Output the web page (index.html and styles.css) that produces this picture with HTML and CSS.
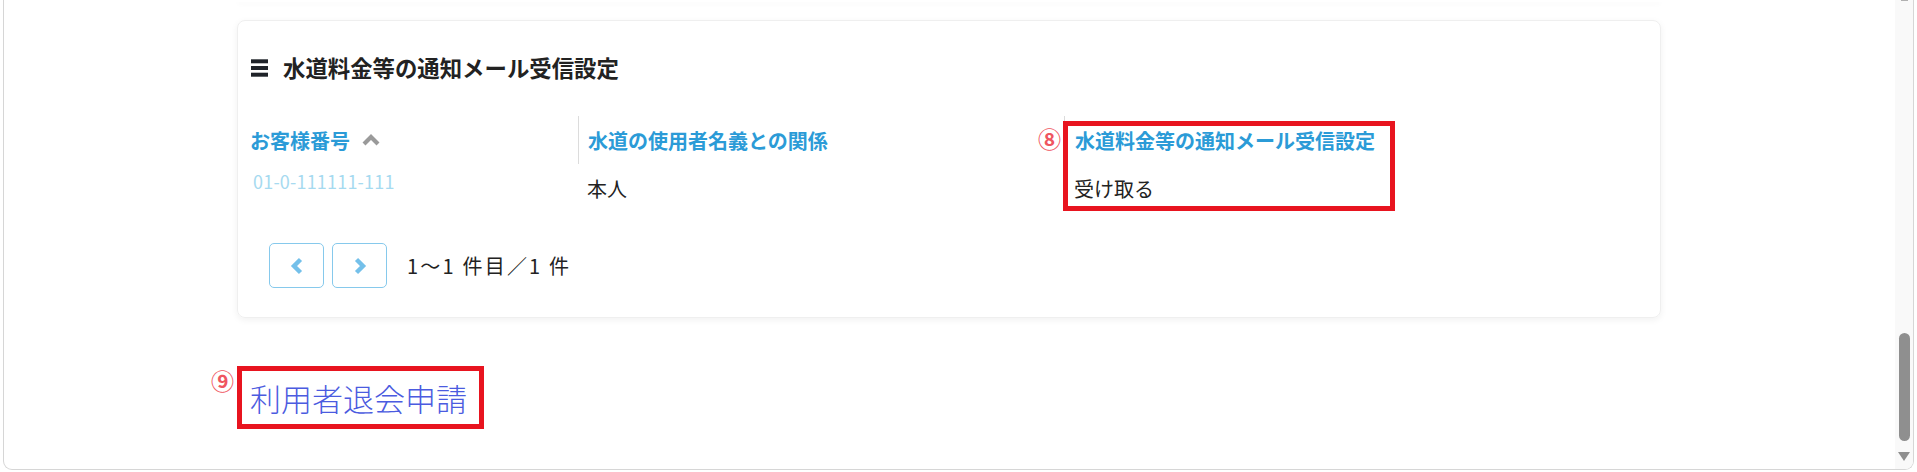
FILE: index.html
```html
<!DOCTYPE html>
<html lang="ja">
<head>
  <meta charset="UTF-8" />
  <meta name="viewport" content="width=device-width, initial-scale=1.0"/>
  <title>通知メール受信設定</title>
  <link rel="stylesheet" href="styles.css">
</head>
<body>
  <div class="window">
    <main class="page">
      <div class="prev-card"></div>

      <section class="card">
        <h2 class="card-title">
          <svg class="menu-icon" width="17" height="18" viewBox="0 0 17 18">
            <rect x="0" y="0.3" width="17" height="4" fill="#1f2329"/>
            <rect x="0" y="7" width="17" height="4" fill="#1f2329"/>
            <rect x="0" y="13.7" width="17" height="4" fill="#1f2329"/>
          </svg>
          水道料金等の通知メール受信設定
        </h2>

        <div class="table">
          <div class="col col-no">
            <div class="th">
              お客様番号
              <svg class="sort-icon" width="18" height="12" viewBox="0 0 18 12">
                <polyline points="2,10 9,3 16,10" fill="none" stroke="#9a9a9a" stroke-width="4.2"/>
              </svg>
            </div>
            <div class="td td-no">01-0-111111-111</div>
          </div>
          <div class="col col-rel">
            <div class="th">水道の使用者名義との関係</div>
            <div class="td">本人</div>
          </div>
          <div class="col col-mail">
            <div class="th">水道料金等の通知メール受信設定</div>
            <div class="td">受け取る</div>
            <span class="mark mark-8">⑧</span>
            <div class="note-box"></div>
          </div>
        </div>

        <div class="pager">
          <button class="page-btn" type="button">
            <svg width="14" height="18" viewBox="0 0 14 18">
              <polyline points="10.5,2.5 4,9 10.5,15.5" fill="none" stroke="#74c0ea" stroke-width="4.4"/>
            </svg>
          </button>
          <button class="page-btn" type="button">
            <svg width="14" height="18" viewBox="0 0 14 18">
              <polyline points="3.5,2.5 10,9 3.5,15.5" fill="none" stroke="#74c0ea" stroke-width="4.4"/>
            </svg>
          </button>
          <span class="page-info">1〜1 件目／1 件</span>
        </div>
      </section>

      <div class="withdraw">
        <span class="mark mark-9">⑨</span>
        <a class="withdraw-link" href="#">利用者退会申請</a>
      </div>
    </main>

    <div class="scrollbar">
      <div class="scroll-up"></div>
      <div class="scroll-thumb"></div>
      <div class="scroll-down"></div>
    </div>
  </div>
</body>
</html>
```

FILE: styles.css
```css
body {
  margin: 0;
  font-family: "Noto Sans CJK JP", "Noto Sans", sans-serif;
  color: #222;
  background: #fff;
}
.window {
  display: flex;
  height: 470px;
  margin: 0 3px;
  border: 1px solid #d6d6d6;
  border-top: none;
  border-radius: 0 0 9px 9px;
  box-sizing: border-box;
  overflow: hidden;
  background: #fff;
}
.page {
  flex: 1;
  padding-left: 233px;
}
.prev-card {
  width: 1424px;
  height: 2px;
  box-shadow: 0 2px 5px rgba(0,0,0,0.04);
  border-radius: 0 0 8px 8px;
}

/* card */
.card {
  width: 1424px;
  height: 298px;
  margin-top: 18px;
  padding: 30px 12px 31px;
  box-sizing: border-box;
  border: 1px solid #efefef;
  border-radius: 8px;
  box-shadow: 0 2px 7px rgba(0,0,0,0.06);
}
.card-title {
  margin: 0;
  display: flex;
  align-items: center;
  gap: 15px;
  font-size: 22.4px;
  line-height: 33px;
  font-weight: bold;
  color: #222;
}
.menu-icon { margin-left: 1px; }

/* table */
.table {
  display: flex;
  margin-top: 32px;
}
.col { box-sizing: border-box; }
.col-no { width: 328px; }
.col-rel { width: 486px; }
.col-mail { position: relative; flex: 1; }
.th {
  height: 48px;
  display: flex;
  align-items: center;
  font-size: 20px;
  font-weight: bold;
  color: #2b9bd7;
}
.col-rel .th, .col-mail .th { border-left: 1px solid #dcdcdc; }
.col-rel .th, .col-rel .td { padding-left: 9px; }
.col-mail .th, .col-mail .td { padding-left: 10px; }
.sort-icon { margin-left: 12px; }
.td {
  height: 50px;
  padding-top: 10px;
  box-sizing: border-box;
  font-size: 20px;
  line-height: 30px;
}
.td-no {
  padding-top: 2px;
  padding-left: 3px;
  font-size: 18px;
  letter-spacing: 0.2px;
  color: #a6daf0;
}

/* annotations */
.mark {
  position: absolute;
  font-size: 23px;
  line-height: 24px;
  font-weight: bold;
  color: #ef5560;
}
.mark-8 { left: -26px; top: 10px; }
.note-box {
  position: absolute;
  left: -1px;
  top: 5px;
  width: 332px;
  height: 90px;
  border: 5px solid #e8141f;
  box-sizing: border-box;
}

/* pager */
.pager {
  display: flex;
  align-items: center;
  gap: 8px;
  margin: 29px 0 0 19px;
}
.page-btn {
  width: 55px;
  height: 45px;
  display: flex;
  align-items: center;
  justify-content: center;
  padding: 0;
  background: #fff;
  border: 1px solid #86c9ec;
  border-radius: 5px;
}
.page-info {
  margin-left: 12px;
  font-size: 20px;
  letter-spacing: 2.2px;
}

/* withdraw link */
.withdraw {
  position: relative;
  display: inline-block;
  margin-top: 48px;
}
.mark-9 { left: -26px; top: 2px; }
.withdraw-link {
  display: inline-block;
  padding: 0 12px 0 8px;
  border: 5px solid #e8141f;
  font-size: 31px;
  line-height: 53px;
  font-weight: 300;
  color: #4b5be0;
  text-decoration: none;
}

/* scrollbar */
.scrollbar {
  width: 18px;
  display: flex;
  flex-direction: column;
  align-items: center;
  background: #f9f9f9;
}
.scroll-up {
  width: 7px;
  height: 1px;
  background: #b0b0b0;
}
.scroll-thumb {
  width: 11px;
  height: 108px;
  margin-top: auto;
  border-radius: 6px;
  background: #8f8f8f;
}
.scroll-down {
  width: 0;
  height: 0;
  margin: 11px 0 8px;
  border-left: 6px solid transparent;
  border-right: 6px solid transparent;
  border-top: 9px solid #8f8f8f;
}
```
